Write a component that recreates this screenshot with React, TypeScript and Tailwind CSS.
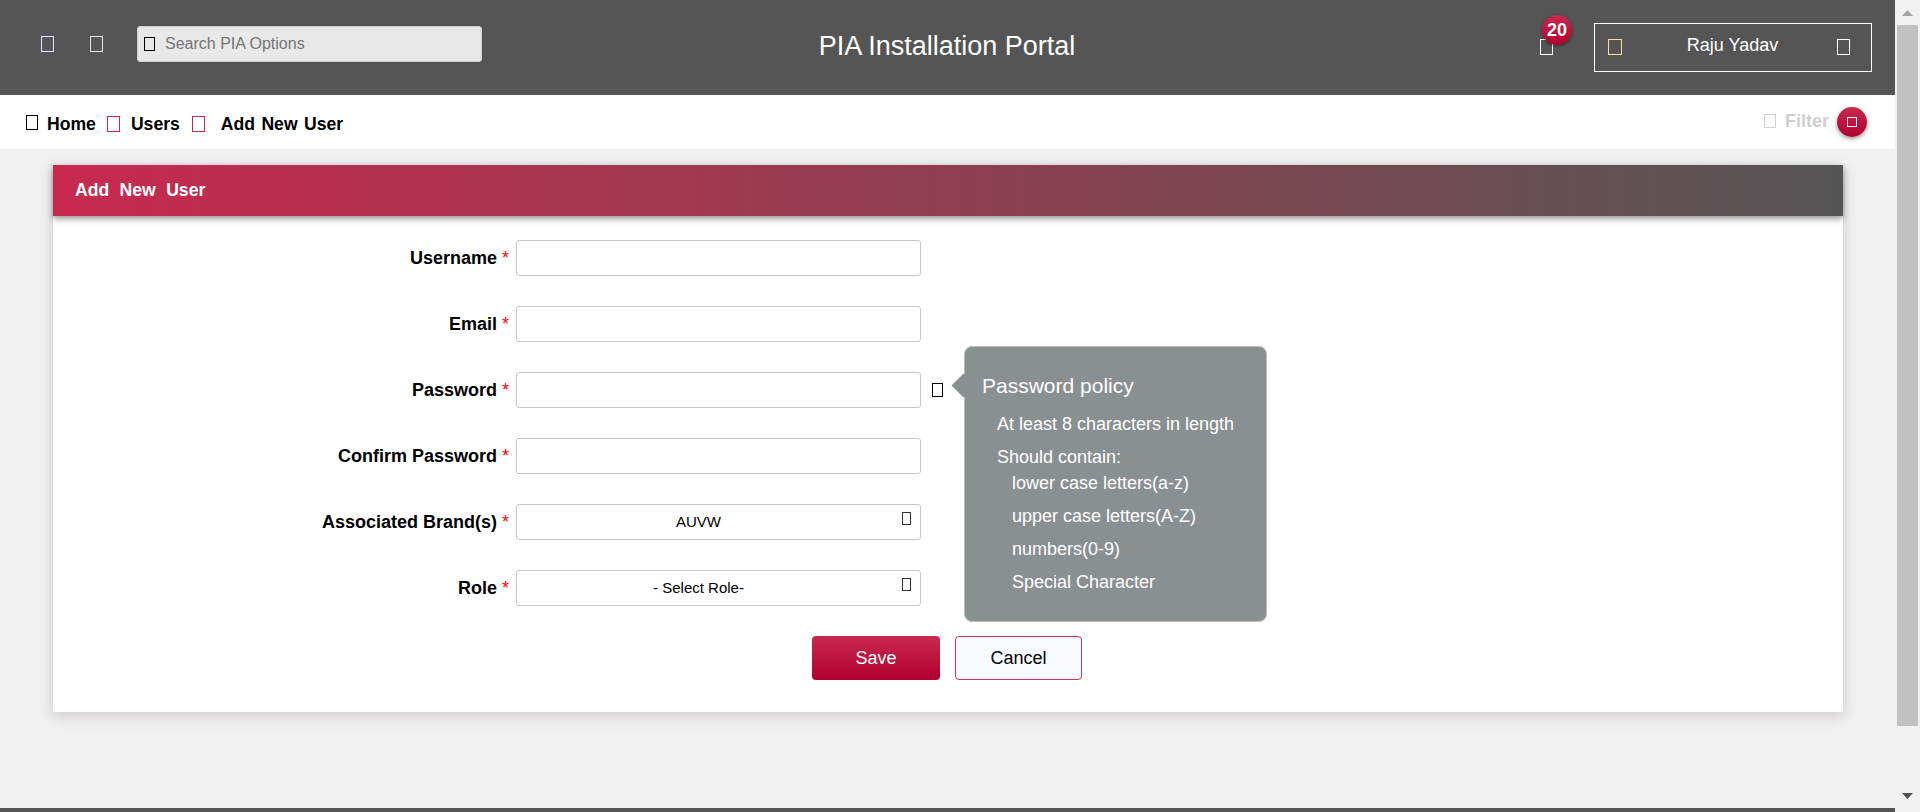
const FONT = { fontFamily: '"Liberation Sans", Arial, sans-serif' };

// The source page's icon font failed to load, so its icons are empty boxes.
const Tofu = ({ className }: { className: string }) => (
  <span className={`block shrink-0 border ${className}`} aria-hidden="true" />
);

const FIELDS = ["Username", "Email", "Password", "Confirm Password"];
const SELECTS = [
  { label: "Associated Brand(s)", value: "AUVW" },
  { label: "Role", value: "- Select Role-" },
];
const RULES = ["lower case letters(a-z)", "upper case letters(A-Z)", "numbers(0-9)", "Special Character"];

function Label({ text }: { text: string }) {
  return (
    <div className="flex w-[463px] shrink-0 justify-end pr-[7px] text-[18px] font-bold text-black">
      <span>{text}</span>
      <span className="ml-[5px] font-normal text-[#ff0000]">*</span>
    </div>
  );
}

function Header() {
  return (
    <header className="flex h-[95px] shrink-0 items-start bg-[#555555] text-white">
      <div className="flex w-[482px] shrink-0 items-center pt-[26px]">
        <Tofu className="ml-[41px] h-[16px] w-[13px] border-[#e4e4ff]" />
        <Tofu className="ml-[36px] h-[16px] w-[13px] border-[#f0e0e0]" />
        <div className="ml-[34px] flex h-[36px] w-[345px] items-center rounded-[3px] border border-[#cfcfcf] bg-[#e8e8e8] pl-[6px]">
          <Tofu className="h-[14px] w-[11px] border-black" />
          <span className="ml-[10px] text-[16px] text-[#757575]">Search PIA Options</span>
        </div>
      </div>
      <h1 className="w-[930px] shrink-0 pt-[30px] text-center text-[27px] leading-[32px] font-normal">PIA Installation Portal</h1>
      <div className="relative mt-[39px] ml-[128px] shrink-0">
        <Tofu className="h-[16px] w-[13px] border-white" />
        <span className="absolute top-[-24px] left-[2px] flex h-[30px] w-[30px] items-center justify-center rounded-full bg-linear-to-b/srgb from-[#c8294f] to-[#b00030] text-[18px] font-bold text-white shadow-[0_1px_3px_rgba(0,0,0,0.5)]">
          20
        </span>
      </div>
      <div className="mt-[23px] ml-[41px] flex h-[49px] w-[278px] shrink-0 items-start border border-white pt-[15px] pl-[13px]">
        <Tofu className="h-[16px] w-[14px] border-[#f3e3a0]" />
        <span className="mt-[-4px] w-[215px] pl-[6px] text-center text-[18px] leading-[20px]">Raju Yadav</span>
        <Tofu className="h-[16px] w-[13px] border-white" />
      </div>
    </header>
  );
}

function Breadcrumb() {
  return (
    <nav className="flex h-[54px] shrink-0 items-center bg-white pt-[4px] pl-[26px] text-[17.6px] font-bold text-black">
      <Tofu className="mt-[-4px] h-[15px] w-[12px] border-black" />
      <span className="ml-[9px]">Home</span>
      <Tofu className="ml-[11px] h-[16px] w-[13px] border-[#c8294f]" />
      <span className="ml-[11px]">Users</span>
      <Tofu className="ml-[12px] h-[16px] w-[13px] border-[#c8294f]" />
      <span className="ml-[16px] [word-spacing:1.5px]">Add New User</span>
      <div className="mt-[-4px] ml-auto flex items-center pr-[28px]">
        <Tofu className="mt-[-3px] h-[14px] w-[12px] border-[#cfcfcf]" />
        <span className="mt-[-1px] ml-[9px] text-[18px] text-[#cfcfcf]">Filter</span>
        <span className="ml-[8px] flex h-[30px] w-[30px] items-center justify-center rounded-full bg-linear-to-b/srgb from-[#c8294f] to-[#b00030] shadow-[0_2px_4px_rgba(0,0,0,0.4)]">
          <Tofu className="h-[10px] w-[10px] border-white" />
        </span>
      </div>
    </nav>
  );
}

function PasswordPolicy() {
  return (
    <div className="absolute top-[-26px] left-[911px] z-10 h-[276px] w-[303px] rounded-[8px] border border-[#b9bdbf] bg-[#8a8f92] pt-[26px] pl-[17px] text-white">
      <span className="absolute top-[30px] left-[-10px] h-[17px] w-[17px] rotate-45 bg-[#8a8f92]" />
      <div className="relative text-[21px] leading-[26px]">Password policy</div>
      <div className="relative mt-[12px] ml-[15px] text-[18px] leading-[26px]">
        <div>At least 8 characters in length</div>
        <div className="mt-[7px]">Should contain:</div>
        <div className="ml-[15px]">
          {RULES.map((r) => (
            <div key={r} className="mb-[7px] last:mb-0">
              {r}
            </div>
          ))}
        </div>
      </div>
    </div>
  );
}

function UserForm() {
  return (
    <section className="mt-[16px] mr-[52px] ml-[53px] bg-white shadow-[0_4px_14px_rgba(60,40,40,0.2)]">
      <h2 className="flex h-[51px] items-center bg-linear-to-r/srgb from-[#c8294f] to-[#555555] pl-[22px] text-[17.6px] font-bold text-white [word-spacing:5.5px] shadow-[0_3px_6px_rgba(0,0,0,0.4)]">
        Add New User
      </h2>
      <div className="pt-[24px] pb-[32px]">
        {FIELDS.map((f) => (
          <div key={f} className="relative mb-[30px] flex h-[36px] items-center">
            <Label text={f} />
            <div className="h-[36px] w-[405px] rounded-[3px] border border-[#c8c8c8] bg-white" />
            {f === "Password" && (
              <>
                <Tofu className="ml-[11px] h-[14px] w-[11px] border-black" />
                <PasswordPolicy />
              </>
            )}
          </div>
        ))}
        {SELECTS.map((s) => (
          <div key={s.label} className="mb-[30px] flex h-[36px] items-center">
            <Label text={s.label} />
            <div className="relative flex h-[36px] w-[405px] items-center justify-center rounded-[3px] border border-[#c8c8c8] bg-white pr-[40px] text-[15px] text-black">
              {s.value}
              <Tofu className="absolute top-[7px] right-[9px] h-[13px] w-[9px] border-[#333333]" />
            </div>
          </div>
        ))}
        <div className="flex pl-[759px] text-[18px]">
          <button className="h-[44px] w-[128px] rounded-[4px] bg-linear-to-b/srgb from-[#c8294f] to-[#b00030] text-white">Save</button>
          <button className="ml-[15px] h-[44px] w-[127px] rounded-[4px] border border-[#c8385a] bg-[#f7fbff] text-black">Cancel</button>
        </div>
      </div>
    </section>
  );
}

function Scrollbar() {
  return (
    <aside className="flex w-[25px] shrink-0 flex-col items-center bg-[#f1f1f1]">
      <svg viewBox="0 0 11 6" className="mt-[10px] h-[6px] w-[11px]" fill="#a3a3a3" aria-hidden="true">
        <path d="M5.5 0 11 6H0z" />
      </svg>
      <div className="mt-[9px] h-[701px] w-[21px] bg-[#c1c1c1]" />
      <svg viewBox="0 0 11 6" className="mt-[67px] h-[6px] w-[11px]" fill="#505050" aria-hidden="true">
        <path d="M0 0h11L5.5 6z" />
      </svg>
    </aside>
  );
}

export default function App() {
  return (
    <div className="flex h-[812px] w-full overflow-hidden bg-[#f1f1f1]" style={FONT}>
      <div className="flex min-w-0 flex-1 flex-col">
        <Header />
        <Breadcrumb />
        <main className="flex-1">
          <UserForm />
        </main>
        <div className="h-[4px] shrink-0 bg-[#555555]" />
      </div>
      <Scrollbar />
    </div>
  );
}
